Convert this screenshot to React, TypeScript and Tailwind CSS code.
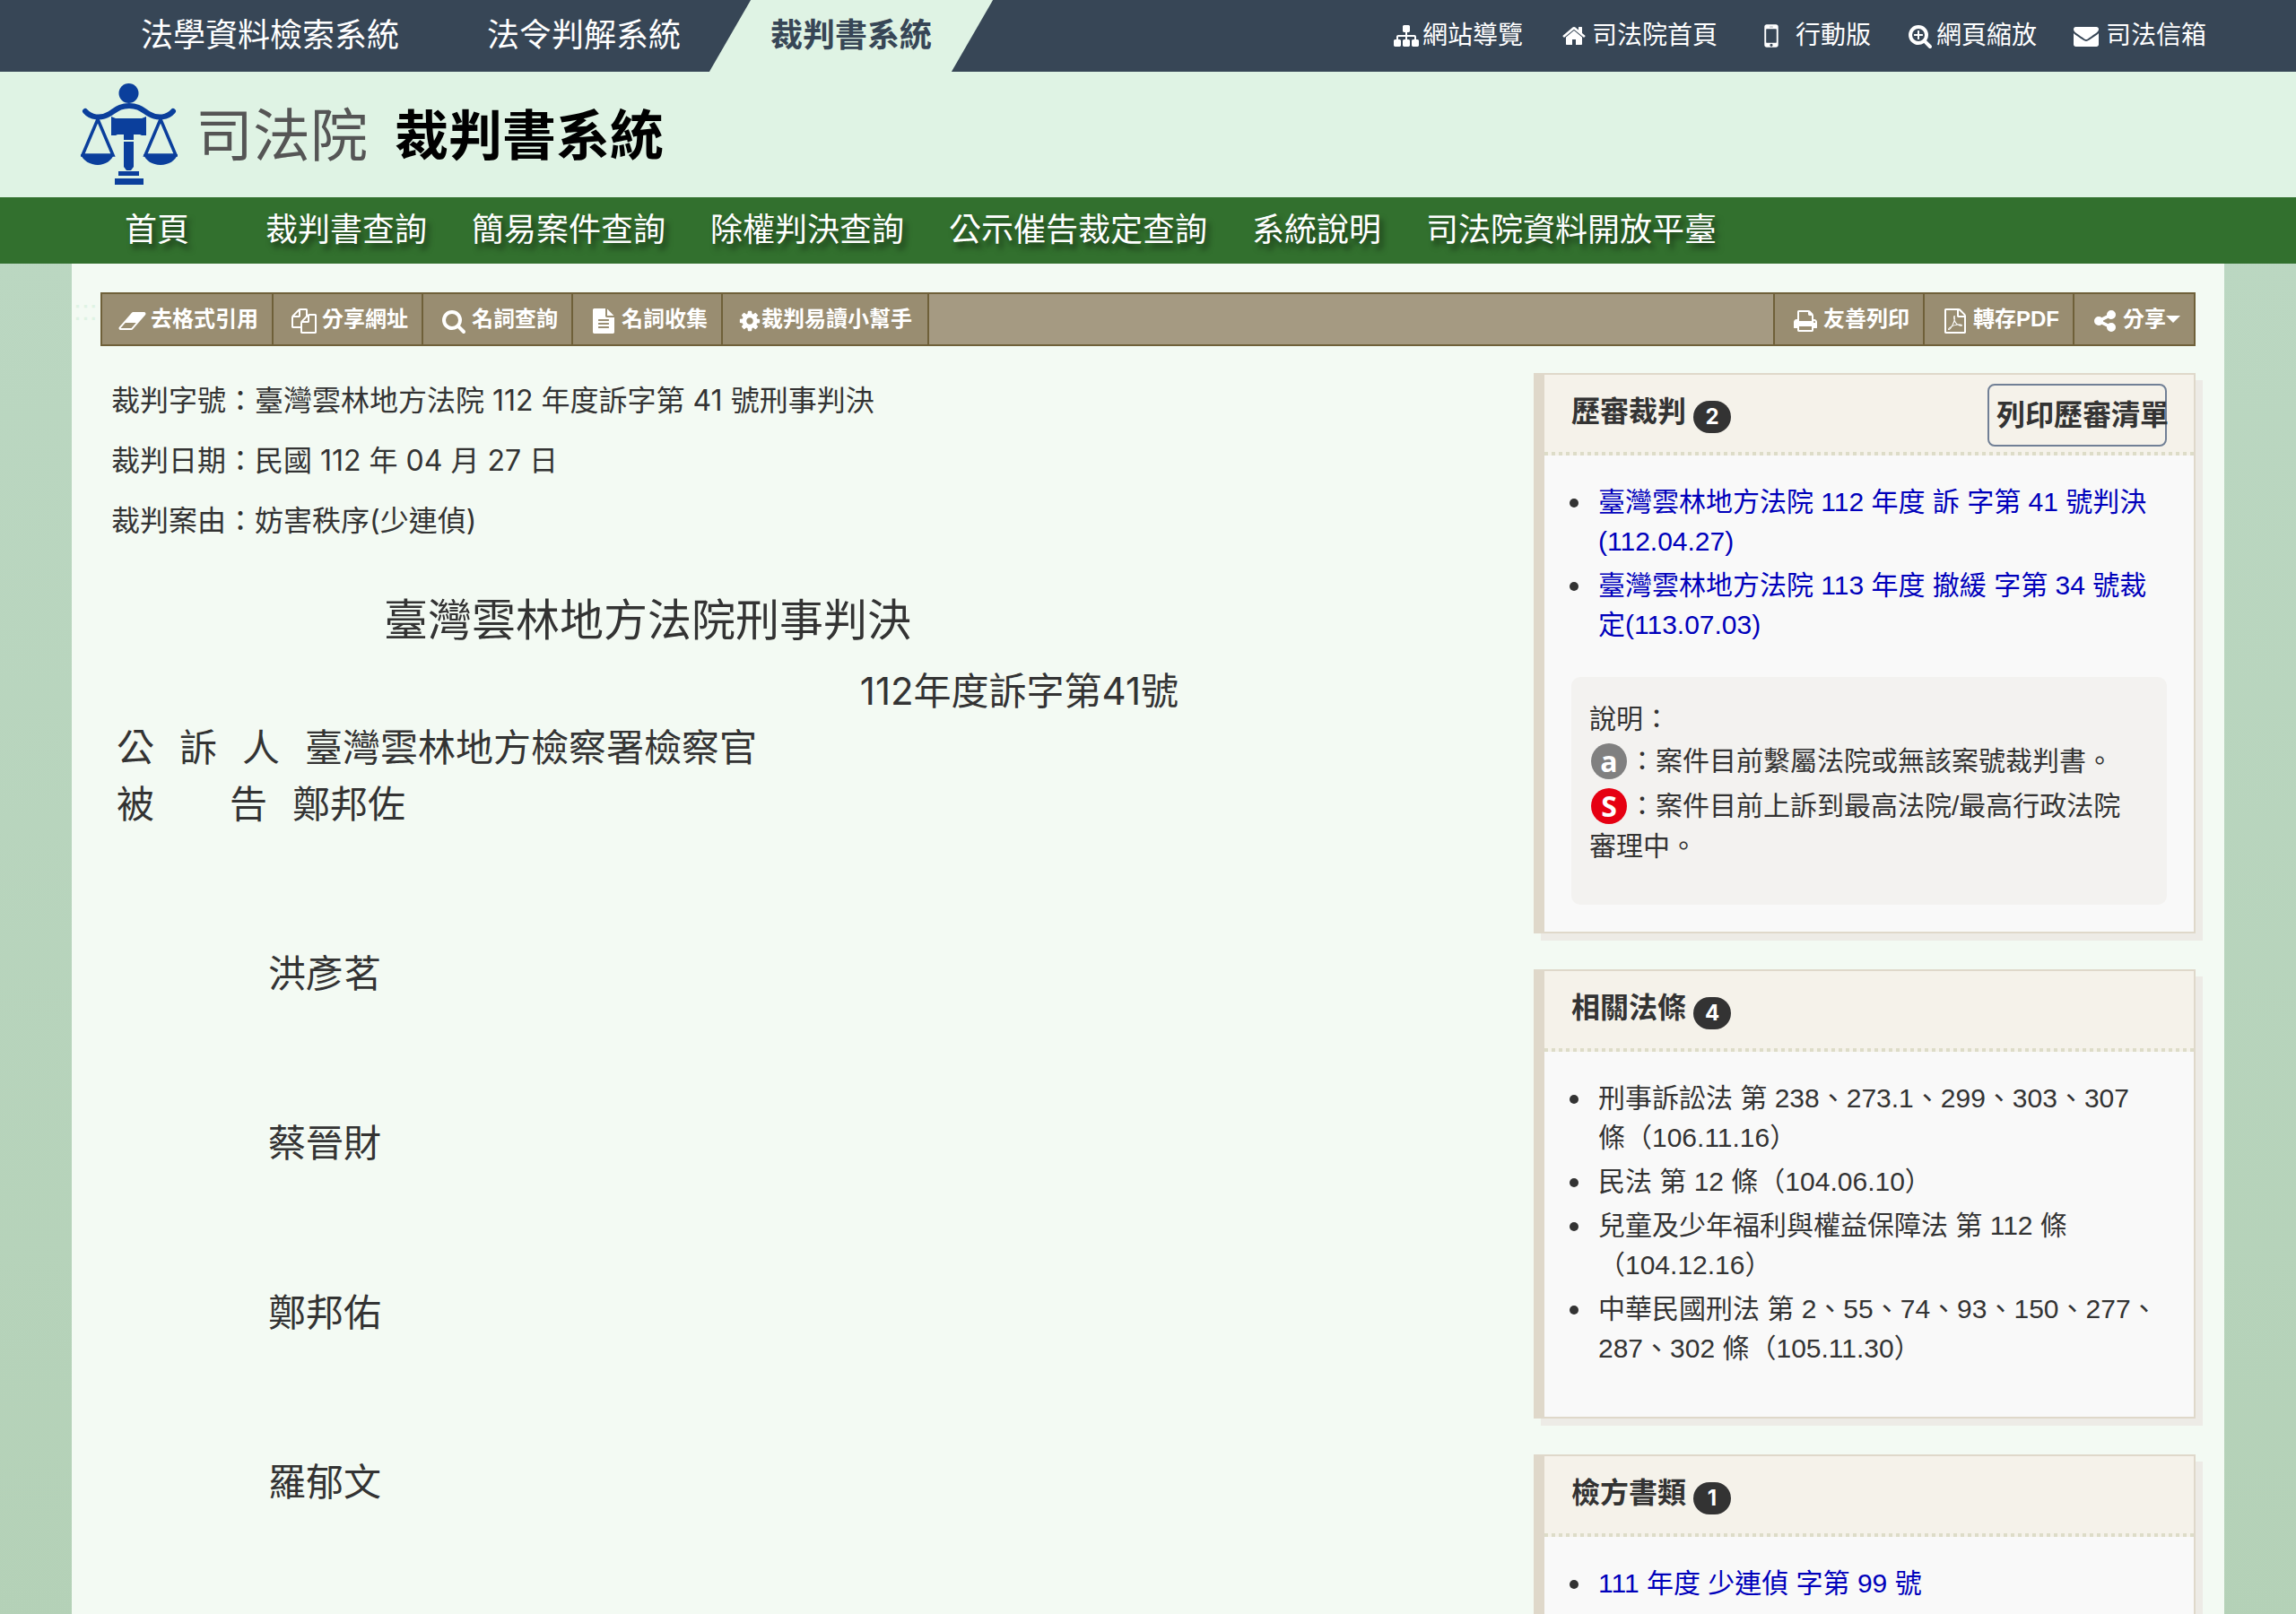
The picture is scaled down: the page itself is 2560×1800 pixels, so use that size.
import type { ReactNode } from "react";

// Font Awesome 4 outlines, drawn on a 1792 unit grid
const ICONS = {
  sitemap:
    "M1792 1248v320q0 40-28 68t-68 28h-320q-40 0-68-28t-28-68v-320q0-40 28-68t68-28h96v-192h-512v192h96q40 0 68 28t28 68v320q0 40-28 68t-68 28h-320q-40 0-68-28t-28-68v-320q0-40 28-68t68-28h96v-192h-512v192h96q40 0 68 28t28 68v320q0 40-28 68t-68 28h-320q-40 0-68-28t-28-68v-320q0-40 28-68t68-28h96v-192q0-52 38-90t90-38h512v-192h-96q-40 0-68-28t-28-68v-320q0-40 28-68t68-28h320q40 0 68 28t28 68v320q0 40-28 68t-68 28h-96v192h512q52 0 90 38t38 90v192h96q40 0 68 28t28 68z",
  home: "M1472 992v480q0 26-19 45t-45 19h-384v-384h-256v384h-384q-26 0-45-19t-19-45v-480q0-1 .5-3t.5-3l575-474 575 474q1 2 1 6zm223-69l-62 74q-8 9-21 11h-3q-13 0-21-7l-692-577-692 577q-12 8-24 7-13-2-21-11l-62-74q-8-10-7-23.5t11-21.5l719-599q32-26 76-26t76 26l244 204v-195q0-14 9-23t23-9h192q14 0 23 9t9 23v408l219 182q10 8 11 21.5t-7 23.5z",
  mobile:
    "M976 1408q0-33-23.5-56.5t-56.5-23.5-56.5 23.5-23.5 56.5 23.5 56.5 56.5 23.5 56.5-23.5 23.5-56.5zm208-160v-704q0-13-9.5-22.5t-22.5-9.5h-512q-13 0-22.5 9.5t-9.5 22.5v704q0 13 9.5 22.5t22.5 9.5h512q13 0 22.5-9.5t9.5-22.5zm-192-848q0-16-16-16h-160q-16 0-16 16t16 16h160q16 0 16-16zm288-16v1024q0 52-38 90t-90 38h-512q-52 0-90-38t-38-90v-1024q0-52 38-90t90-38h512q52 0 90 38t38 90z",
  zoom: "M1088 800v64q0 13-9.5 22.5t-22.5 9.5h-224v224q0 13-9.5 22.5t-22.5 9.5h-64q-13 0-22.5-9.5t-9.5-22.5v-224h-224q-13 0-22.5-9.5t-9.5-22.5v-64q0-13 9.5-22.5t22.5-9.5h224v-224q0-13 9.5-22.5t22.5-9.5h64q13 0 22.5 9.5t9.5 22.5v224h224q13 0 22.5 9.5t9.5 22.5zm128 32q0-185-131.5-316.5t-316.5-131.5-316.5 131.5-131.5 316.5 131.5 316.5 316.5 131.5 316.5-131.5 131.5-316.5zm512 832q0 53-37.5 90.5t-90.5 37.5q-54 0-90-38l-343-342q-179 124-399 124-143 0-273.5-55.5t-225-150-150-225-55.5-273.5 55.5-273.5 150-225 225-150 273.5-55.5 273.5 55.5 225 150 150 225 55.5 273.5q0 220-124 399l343 343q37 37 37 90z",
  envelope:
    "M1792 710v794q0 66-47 113t-113 47h-1472q-66 0-113-47t-47-113v-794q44 49 101 87 362 246 497 345 57 42 92.5 65.5t94.5 48 110 24.5h2q51 0 110-24.5t94.5-48 92.5-65.5q170-123 498-345 57-39 100-87zm0-294q0 79-49 151t-122 123q-376 261-468 325-10 7-42.5 31t-54 38.5-52 32.5-57.5 27-50 9h-2q-23 0-50-9t-57.5-27-52-32.5-54-38.5-42.5-31q-91-64-262-182.5t-205-142.5q-62-42-117-115.5t-55-136.5q0-78 41.5-130t118.5-52h1472q65 0 112.5 47t47.5 113z",
  eraser:
    "M832 1408l336-384h-768l-336 384h768zm1013-1077q15 34 9.5 71.5t-30.5 65.5l-896 1024q-38 44-96 44h-768q-38 0-69.5-20.5t-47.5-54.5q-15-34-9.5-71.5t30.5-65.5l896-1024q38-44 96-44h768q38 0 69.5 20.5t47.5 54.5z",
  files:
    "M1696 384q40 0 68 28t28 68v1216q0 40-28 68t-68 28h-960q-40 0-68-28t-28-68v-288h-544q-40 0-68-28t-28-68v-672q0-40 20-88t48-76l408-408q28-28 76-48t88-20h416q40 0 68 28t28 68v328q68-40 128-40h416zm-544 213l-299 299h299v-299zm-640-384l-299 299h299v-299zm196 647l316-316v-416h-384v416q0 40-28 68t-68 28h-416v640h512v-256q0-40 20-88t48-76zm956 804v-1152h-384v416q0 40-28 68t-68 28h-416v640h896z",
  search:
    "M1216 832q0-185-131.5-316.5t-316.5-131.5-316.5 131.5-131.5 316.5 131.5 316.5 316.5 131.5 316.5-131.5 131.5-316.5zm512 832q0 52-38 90t-90 38q-54 0-90-38l-343-342q-179 124-399 124-143 0-273.5-55.5t-225-150-150-225-55.5-273.5 55.5-273.5 150-225 225-150 273.5-55.5 273.5 55.5 225 150 150 225 55.5 273.5q0 220-124 399l343 343q37 37 37 90z",
  file: "M1596 476q14 14 28 36h-472v-472q22 14 36 28zm-476 164h544v1056q0 40-28 68t-68 28h-1344q-40 0-68-28t-28-68v-1600q0-40 28-68t68-28h800v544q0 40 28 68t68 28zm160 736v-64q0-14-9-23t-23-9h-704q-14 0-23 9t-9 23v64q0 14 9 23t23 9h704q14 0 23-9t9-23zm0-256v-64q0-14-9-23t-23-9h-704q-14 0-23 9t-9 23v64q0 14 9 23t23 9h704q14 0 23-9t9-23zm0-256v-64q0-14-9-23t-23-9h-704q-14 0-23 9t-9 23v64q0 14 9 23t23 9h704q14 0 23-9t9-23z",
  cog: "M1152 896q0-106-75-181t-181-75-181 75-75 181 75 181 181 75 181-75 75-181zm512-109v222q0 12-8 23t-20 13l-185 28q-19 54-39 91 35 50 107 138 10 12 10 25t-9 23q-27 37-99 108t-94 71q-12 0-26-9l-138-108q-44 23-91 38-16 136-29 186-7 28-36 28h-222q-14 0-24.5-8.5t-11.5-21.5l-28-184q-49-16-90-37l-141 107q-10 9-25 9-14 0-25-11-126-114-165-168-7-10-7-23 0-12 8-23 15-21 51-66.5t54-70.5q-27-50-41-99l-183-27q-13-2-21-12.5t-8-23.5v-222q0-12 8-23t19-13l186-28q14-46 39-92-40-57-107-138-10-12-10-24 0-10 9-23 26-36 98.5-107.5t94.5-71.5q13 0 26 10l138 107q44-23 91-38 16-136 29-186 7-28 36-28h222q14 0 24.5 8.5t11.5 21.5l28 184q49 16 90 37l142-107q9-9 24-9 13 0 25 10 129 119 165 170 7 8 7 22 0 12-8 23-15 21-51 66.5t-54 70.5q26 50 41 98l183 28q13 2 21 12.5t8 23.5z",
  print:
    "M448 1536h896v-256h-896v256zm0-640h896v-384h-160q-40 0-68-28t-28-68v-160h-640v640zm1152 64q0-26-19-45t-45-19-45 19-19 45 19 45 45 19 45-19 19-45zm128 0v416q0 13-9.5 22.5t-22.5 9.5h-224v160q0 40-28 68t-68 28h-960q-40 0-68-28t-28-68v-160h-224q-13 0-22.5-9.5t-9.5-22.5v-416q0-79 56.5-135.5t135.5-56.5h64v-544q0-40 28-68t68-28h672q40 0 88 20t76 48l152 152q28 28 48 76t20 88v256h64q79 0 135.5 56.5t56.5 135.5z",
  pdf: "M1596 380q28 28 48 76t20 88v1152q0 40-28 68t-68 28h-1344q-40 0-68-28t-28-68v-1600q0-40 28-68t68-28h896q40 0 88 20t76 48zm-444-244v376h376q-10-29-22-41l-313-313q-12-12-41-22zm384 1528v-1024h-416q-40 0-68-28t-28-68v-416h-768v1536h1280zm-514-593q33 26 84 56 59-7 117-7 147 0 177 49 16 22 2 52 0 1-1 2l-2 2v1q-6 38-71 38-48 0-115-20t-130-53q-221 24-392 83-153 262-242 262-15 0-28-7l-24-12q-1-1-6-5-10-10-6-36 9-40 56-91.5t132-96.5q14-9 23 6 2 2 2 4 52-85 107-197 68-136 104-262-24-82-30.5-159.5t6.5-127.5q11-40 42-40h22q23 0 35 15 18 21 9 68-2 6-4 8 1 3 1 8v30q-2 123-14 192 55 164 146 238zm-576 411q52-24 137-158-51 40-87.5 84t-49.5 74zm398-920q-15 42-2 132 1-7 7-44 0-3 7-43 1-4 4-8-1-1-1-2-1-2-1-3-1-22-13-36 0 1-1 2v2zm-124 661q135-54 284-81-2-1-13-9.5t-16-13.5q-76-67-127-176-27 86-83 197-30 56-45 83zm646-16q-24-24-140-24 76 28 124 28 14 0 18-1 0-1-2-3z",
  share:
    "M1344 1024q133 0 226.5 93.5t93.5 226.5-93.5 226.5-226.5 93.5-226.5-93.5-93.5-226.5q0-12 2-34l-360-180q-92 86-218 86-133 0-226.5-93.5t-93.5-226.5 93.5-226.5 226.5-93.5q126 0 218 86l360-180q-2-22-2-34 0-133 93.5-226.5t226.5-93.5 226.5 93.5 93.5 226.5-93.5 226.5-226.5 93.5q-126 0-218-86l-360 180q2 22 2 34t-2 34l360 180q92-86 218-86z",
};

type IconName = keyof typeof ICONS;

function Icon({ name, className }: { name: IconName; className: string }) {
  return (
    <svg viewBox={name === "eraser" ? "0 0 1860 1792" : "0 0 1792 1792"} fill="currentColor" className={className} aria-hidden="true">
      <path d={ICONS[name]} />
    </svg>
  );
}

function ScalesLogo() {
  return (
    <svg viewBox="0 0 108 114" className="h-[114px] w-[108px]" fill="#0b3f9c" aria-hidden="true">
      <circle cx="53.500" cy="11" r="11" />
      <path
        d="M5 31c6 7 17 9 27 3 8-5 12-9 22-9s14 4 22 9c10 6 21 4 27-3"
        fill="none"
        stroke="#0b3f9c"
        strokeWidth="6"
        strokeLinecap="round"
      />
      <path d="M34 37l5 2h29l5-2v21h-5l-2-1h-7v6H48v-6h-7l-2 1h-5z" />
      <path d="M48 65h11v28l-3 4h-5l-3-4z" />
      <path d="M42 98h23v5H42zM38 106h32v7H38z" />
      <path d="M19 40L2 80h34zM89 40L72 80h34z" fill="none" stroke="#0b3f9c" strokeWidth="3.500" />
      <path d="M0 79h37c-2 7-10 12-18 12S2 86 0 79zM70 79h38c-2 7-10 12-19 12s-17-5-19-12z" />
    </svg>
  );
}

const siteTabs = ["法學資料檢索系統", "法令判解系統"];

const quickLinks: { icon: IconName; label: string; gap: string; size: string }[] = [
  { icon: "sitemap", label: "網站導覽", gap: "gap-1", size: "h-7 w-7" },
  { icon: "home", label: "司法院首頁", gap: "gap-1", size: "h-7 w-8" },
  { icon: "mobile", label: "行動版", gap: "gap-2", size: "h-[36px] w-[38px]" },
  { icon: "zoom", label: "網頁縮放", gap: "gap-1", size: "h-7 w-7" },
  { icon: "envelope", label: "司法信箱", gap: "gap-2", size: "h-7 w-7" },
];

const navItems = ["裁判書查詢", "簡易案件查詢", "除權判決查詢", "公示催告裁定查詢", "系統說明", "司法院資料開放平臺"];

const leftTools: { icon: IconName; label: string }[] = [
  { icon: "eraser", label: "去格式引用" },
  { icon: "files", label: "分享網址" },
  { icon: "search", label: "名詞查詢" },
  { icon: "file", label: "名詞收集" },
];

const facts = [
  ["裁判字號：", "臺灣雲林地方法院 112 年度訴字第 41 號刑事判決"],
  ["裁判日期：", "民國 112 年 04 月 27 日"],
  ["裁判案由：", "妨害秩序(少連偵)"],
];

const defendants = ["洪彥茗", "蔡晉財", "鄭邦佑", "羅郁文"];

const statutes = [
  "刑事訴訟法 第 238、273.1、299、303、307 條（106.11.16）",
  "民法 第 12 條（104.06.10）",
  "兒童及少年福利與權益保障法 第 112 條（104.12.16）",
  "中華民國刑法 第 2、55、74、93、150、277、287、302 條（105.11.30）",
];

function ToolButton({ icon, label, children }: { icon: IconName; label: string; children?: ReactNode }) {
  return (
    <button type="button" className="flex h-14 cursor-pointer items-center bg-[#998d71] pl-[18px] pr-[15px] text-2xl font-bold text-white">
      <span className="mr-1 flex w-8 justify-center">
        <Icon name={icon} className="mt-1 h-7 w-8" />
      </span>
      {label}
      {children}
    </button>
  );
}

function Card({ title, count, action, children }: { title: string; count: number; action?: ReactNode; children: ReactNode }) {
  return (
    <section className="border-2 border-l-[12px] border-[#dfd8ca] bg-[#f9f9f9] shadow-[8px_8px_0_#edebe6]">
      <header className="flex h-[86px] items-center bg-[#f5f2ea] px-[30px]">
        <h3 className="pb-1 text-[32px] leading-10 font-bold">{title}</h3>
        <span className="mt-2 ml-2 flex h-9 w-[42px] items-center justify-center rounded-full bg-[#333] font-[Inter,sans-serif] text-2xl font-bold text-white">
          {count}
        </span>
        {action}
      </header>
      <div className="h-1 bg-[#f5f2ea]">
        <div className="h-1 bg-[repeating-linear-gradient(to_right,#dddcc8_0_4px,transparent_4px_8px)]" />
      </div>
      <div className="p-[30px] text-[30px] leading-[44px]">{children}</div>
    </section>
  );
}

function CardList({ items, linked }: { items: string[]; linked?: boolean }) {
  return (
    <ul className="mb-6 space-y-[5px] pr-2">
      {items.map((item) => (
        <li key={item} className="flex">
          <span className="mt-[18px] mr-[22px] -ml-0.5 h-2.5 w-2.5 shrink-0 rounded-full bg-[#333]" />
          {linked ? (
            <a href="#" className="text-[#0000bb]">
              {item}
            </a>
          ) : (
            <span>{item}</span>
          )}
        </li>
      ))}
    </ul>
  );
}

export default function App() {
  return (
    <div className="min-h-screen bg-linear-to-b from-[#bcd8c3] to-[#b4d1b7] font-['Liberation_Sans','Noto_Sans_CJK_TC',sans-serif] text-[#333]" lang="zh-Hant">
      <div className="flex h-20 items-center justify-between overflow-hidden bg-[#374656] pr-[100px] pl-[108px] text-white">
        <nav className="flex h-full items-center text-4xl" aria-label="系統切換">
          {siteTabs.map((tab) => (
            <a key={tab} href="#" className="px-[49px]">
              {tab}
            </a>
          ))}
          <a
            href="#"
            aria-current="page"
            className="relative z-0 ml-1.5 flex h-full items-center px-[45px] font-bold text-[#374656] before:absolute before:inset-0 before:-z-10 before:-skew-x-[30deg] before:bg-[#dff3e4]"
          >
            裁判書系統
          </a>
        </nav>
        <nav className="flex items-center gap-[41px] text-[28px]" aria-label="快速連結">
          {quickLinks.map((link) => (
            <a key={link.label} href="#" className={`flex items-center ${link.gap}`}>
              <Icon name={link.icon} className={link.size} />
              {link.label}
            </a>
          ))}
        </nav>
      </div>

      <header className="flex h-[140px] items-center bg-[#dff3e4] pl-[90px]">
        <a href="#" className="flex items-center gap-5">
          <ScalesLogo />
          <span className="pt-1 text-[64px] leading-none text-[#555]">司法院</span>
        </a>
        <h1 className="ml-[30px] pt-1.5 text-6xl leading-none font-bold text-black">裁判書系統</h1>
      </header>

      <nav className="flex h-[74px] items-center gap-[50px] bg-[#32702e] pl-[104px] text-4xl text-white [text-shadow:4px_6px_6px_rgba(0,0,0,0.5)]" aria-label="主選單">
        <a href="#" className="w-[142px] pl-[35px]">
          首頁
        </a>
        {navItems.map((item) => (
          <a key={item} href="#">
            {item}
          </a>
        ))}
      </nav>

      <div className="relative mx-20 bg-[#f3faf3] px-8 pt-8">
        <a href="#content" className="absolute top-8 left-0.5 text-[32px] leading-10 text-[#dff3e4]">
          :::
        </a>
        <div className="flex justify-between border-2 border-[#6f6039] bg-[#a59a82]">
          <div className="flex divide-x-2 divide-[#6f6039] border-r-2 border-[#6f6039]">
            {leftTools.map((tool) => (
              <ToolButton key={tool.label} icon={tool.icon} label={tool.label} />
            ))}
            <button type="button" className="flex h-14 cursor-pointer items-center bg-[#998d71] px-[17px] text-2xl font-bold text-white">
              <Icon name="cog" className="mt-1 h-7 w-[26px]" />
              裁判易讀小幫手
            </button>
          </div>
          <div className="flex divide-x-2 divide-[#6f6039] border-l-2 border-[#6f6039]">
            <ToolButton icon="print" label="友善列印" />
            <ToolButton icon="pdf" label="轉存PDF" />
            <ToolButton icon="share" label="分享">
              <svg viewBox="0 0 16 8" className="h-2 w-4" fill="currentColor" aria-hidden="true">
                <path d="M0 0h16L8 8z" />
              </svg>
            </ToolButton>
          </div>
        </div>

        <div className="flex items-start gap-10 pt-[30px]" id="content">
          <main className="-mt-[3px] min-w-0 flex-1 font-[Inter,'Noto_Sans_CJK_TC',sans-serif]">
            <dl className="pl-3 text-[32px] leading-[67px]">
              {facts.map(([term, value]) => (
                <div key={term} className="flex">
                  <dt>{term}</dt>
                  <dd>{value}</dd>
                </div>
              ))}
            </dl>
            <article className="mt-[30px] box-content w-[1184px] pl-[18px] text-[42px] leading-[63px]">
              <h2 className="text-center text-[49px] leading-[95px]">臺灣雲林地方法院刑事判決</h2>
              <p className="text-right">112年度訴字第41號</p>
              <p className="flex gap-7">
                <span>公</span>
                <span>訴</span>
                <span>人</span>
                <span>臺灣雲林地方檢察署檢察官</span>
              </p>
              <p className="flex gap-7">
                <span className="flex w-[168px] justify-between">
                  <span>被</span>
                  <span>告</span>
                </span>
                <span>鄭邦佐</span>
              </p>
              <div className="flex flex-col gap-[126px] pt-[126px] pl-[169px]">
                {defendants.map((name) => (
                  <p key={name}>{name}</p>
                ))}
              </div>
            </article>
          </main>

          <aside className="flex w-[738px] shrink-0 flex-col gap-10">
            <Card
              title="歷審裁判"
              count={2}
              action={
                <button
                  type="button"
                  className="mt-1 ml-auto h-[70px] w-[200px] cursor-pointer rounded-lg border-2 border-[#718096] pl-2 text-left text-[32px] font-bold whitespace-nowrap"
                >
                  列印歷審清單
                </button>
              }
            >
              <CardList
                linked
                items={["臺灣雲林地方法院 112 年度 訴 字第 41 號判決(112.04.27)", "臺灣雲林地方法院 113 年度 撤緩 字第 34 號裁定(113.07.03)"]}
              />
              <div className="mt-9 rounded-[10px] bg-[#f3f2f0] pt-[26px] pr-8 pb-11 pl-5 leading-[42px]">
                <p>說明：</p>
                <p className="pt-[5px]">
                  <span className="mx-0.5 mb-1 inline-flex h-10 w-10 items-center justify-center rounded-full bg-[#808080] align-middle font-['Open_Sans',sans-serif] text-[32px] leading-none font-bold text-white">
                    a
                  </span>
                  ：案件目前繫屬法院或無該案號裁判書。
                </p>
                <p className="pt-[5px]">
                  <span className="mx-0.5 mb-1 inline-flex h-10 w-10 items-center justify-center rounded-full bg-[#e60012] align-middle font-['Open_Sans',sans-serif] text-[32px] leading-none font-bold text-white">
                    S
                  </span>
                  ：案件目前上訴到最高法院/最高行政法院審理中。
                </p>
              </div>
            </Card>
            <Card title="相關法條" count={4}>
              <CardList items={statutes} />
            </Card>
            <Card title="檢方書類" count={1}>
              <CardList linked items={["111 年度 少連偵 字第 99 號"]} />
            </Card>
          </aside>
        </div>
      </div>
    </div>
  );
}
